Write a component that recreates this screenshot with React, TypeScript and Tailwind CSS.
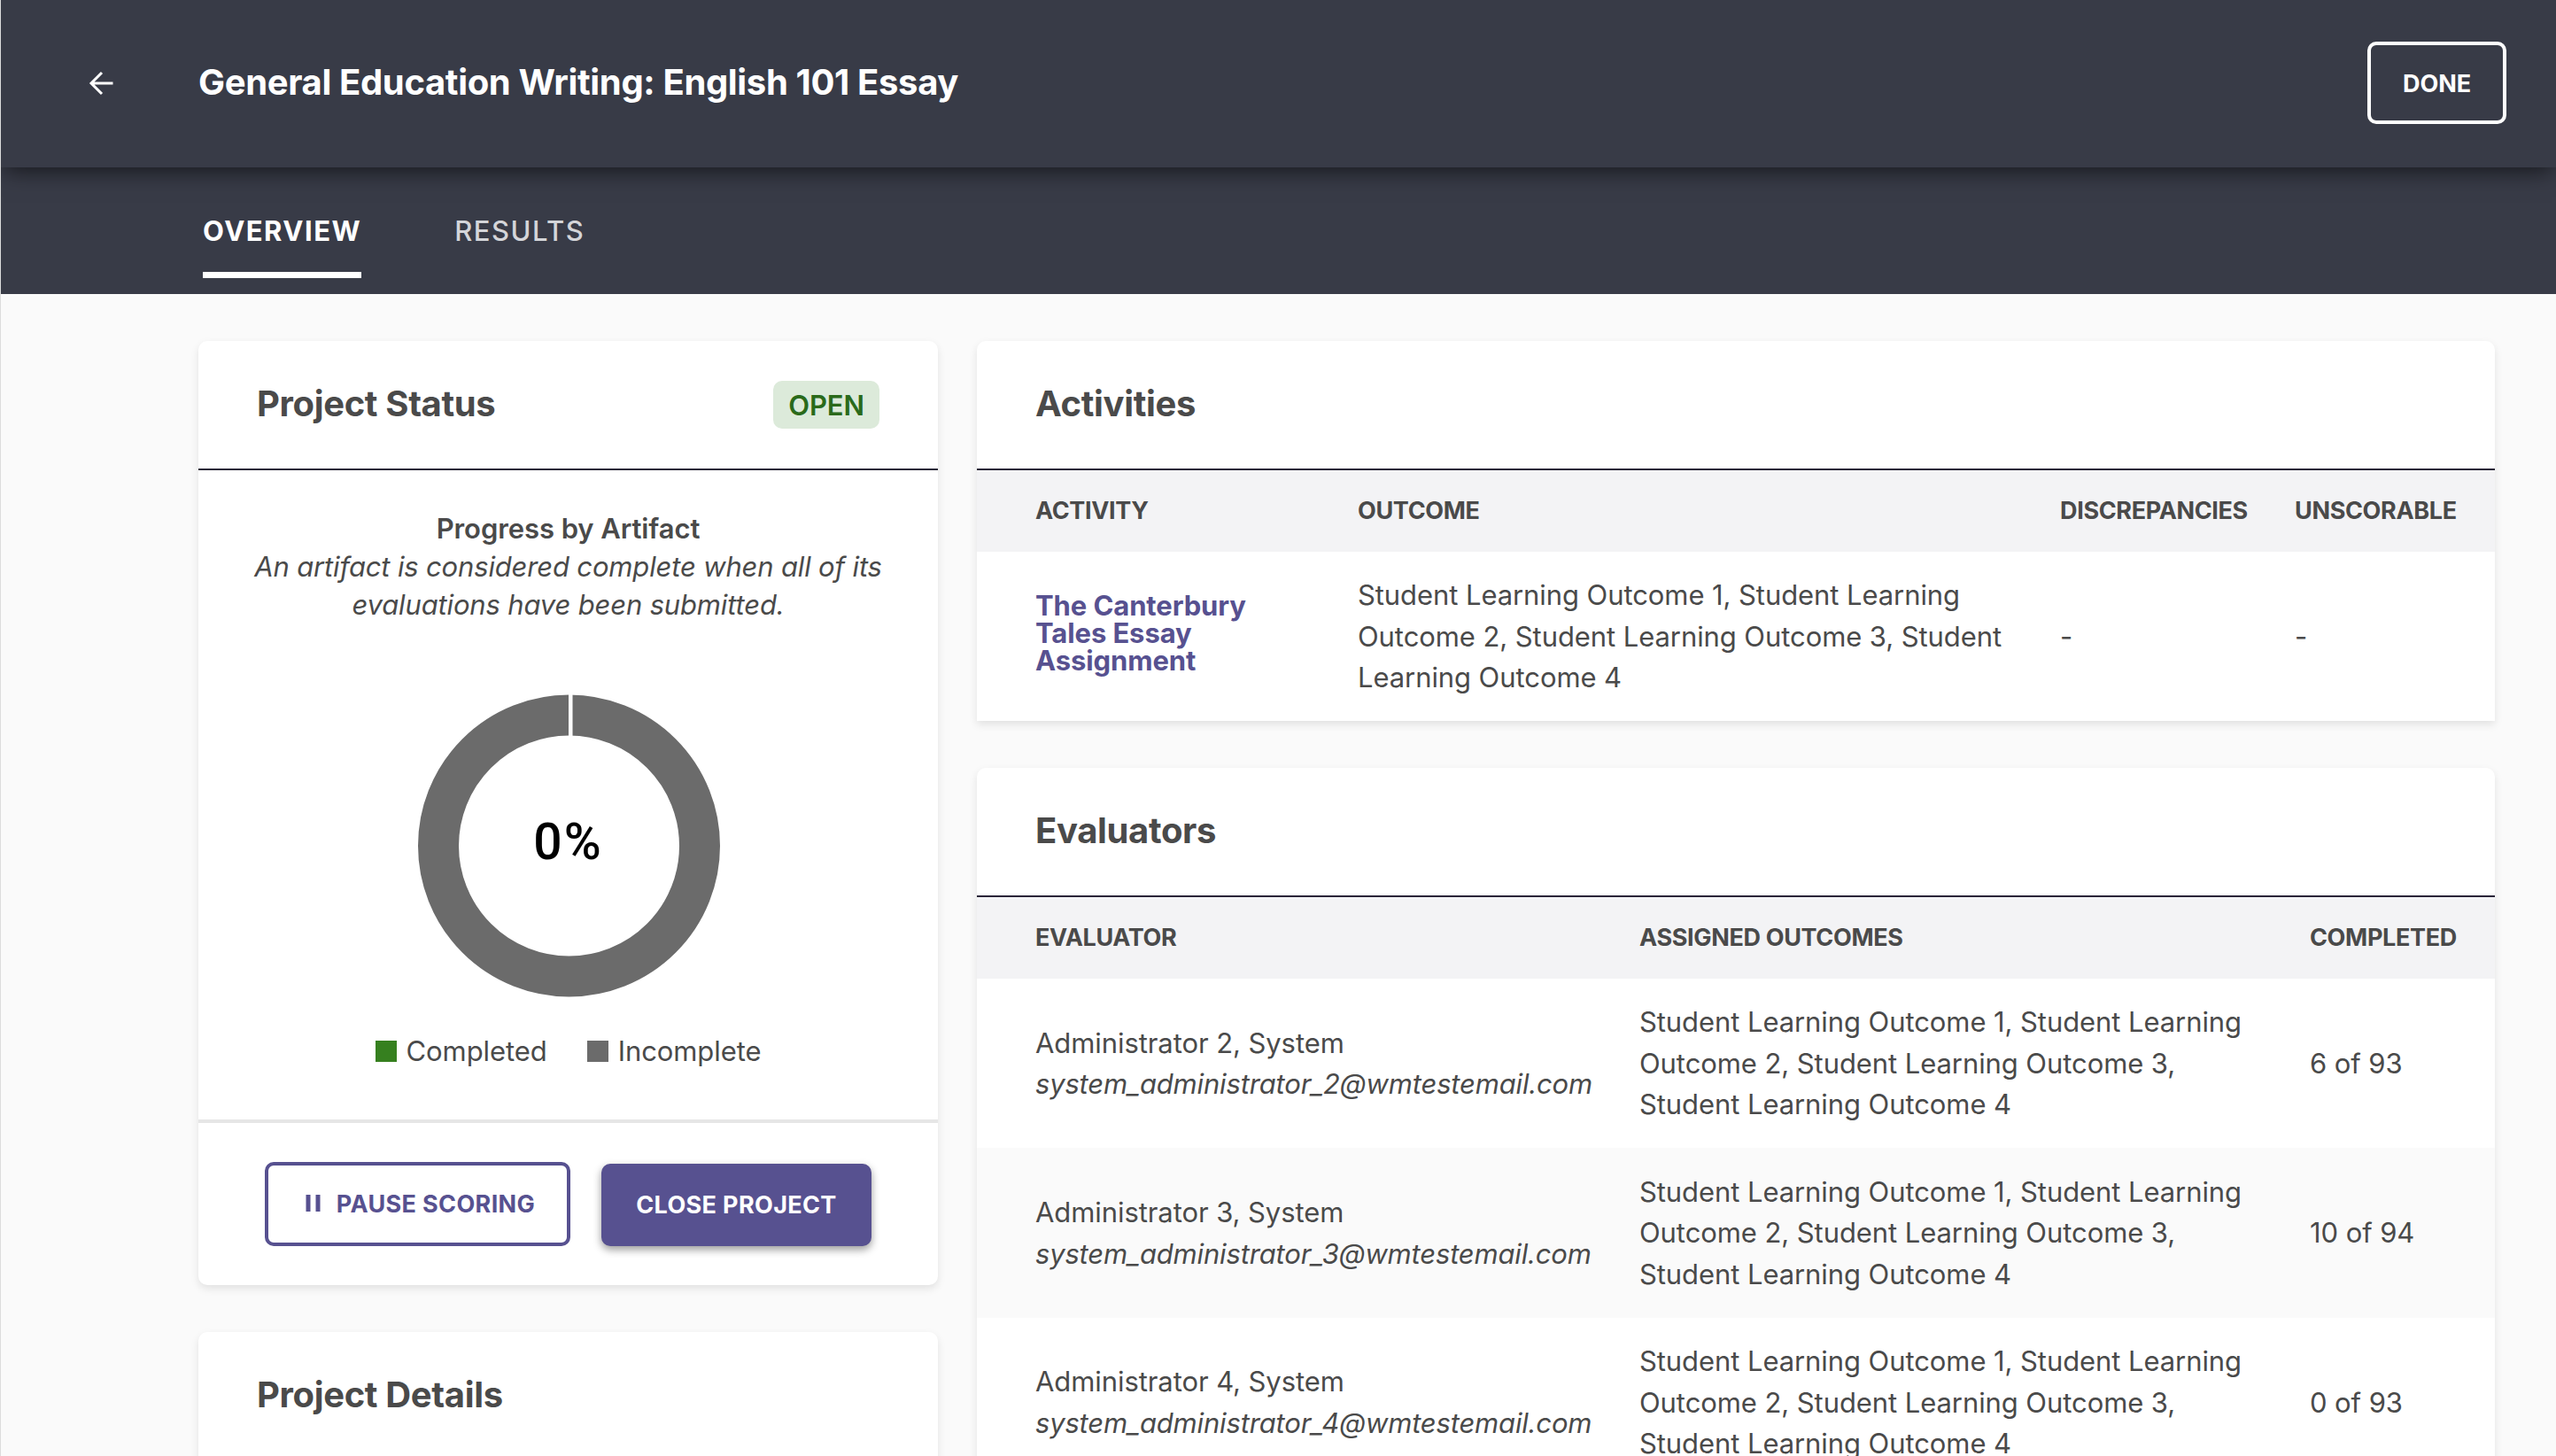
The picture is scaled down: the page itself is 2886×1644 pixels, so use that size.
import type { ReactNode } from 'react';
import clsx from 'clsx';

type Evaluator = {
  name: string;
  email: string;
  outcomes: string;
  completed: string;
};

const OUTCOMES =
  'Student Learning Outcome 1, Student Learning Outcome 2, Student Learning Outcome 3, Student Learning Outcome 4';

const activities = [
  {
    name: 'The Canterbury Tales Essay Assignment',
    outcomes: OUTCOMES,
    discrepancies: '-',
    unscorable: '-',
  },
];

const evaluators: Evaluator[] = [
  {
    name: 'Administrator 2, System',
    email: 'system_administrator_2@wmtestemail.com',
    outcomes: OUTCOMES,
    completed: '6 of 93',
  },
  {
    name: 'Administrator 3, System',
    email: 'system_administrator_3@wmtestemail.com',
    outcomes: OUTCOMES,
    completed: '10 of 94',
  },
  {
    name: 'Administrator 4, System',
    email: 'system_administrator_4@wmtestemail.com',
    outcomes: OUTCOMES,
    completed: '0 of 93',
  },
];

function BackIcon() {
  return (
    <svg
      className="size-[28px]"
      viewBox="0 0 28 28"
      fill="none"
      stroke="currentColor"
      strokeWidth="3"
    >
      <path d="M27.5 14H3M15 2 3 14l12 12" />
    </svg>
  );
}

function PauseIcon() {
  return (
    <svg
      className="mb-[3px] h-[19px] w-[17px]"
      viewBox="0 0 17 19"
      fill="currentColor"
    >
      <rect x="0.5" width="5" height="19" />
      <rect x="11.5" width="5" height="19" />
    </svg>
  );
}

function Card({
  title,
  badge,
  children,
  className,
}: {
  title: string;
  badge?: ReactNode;
  children?: ReactNode;
  className?: string;
}) {
  return (
    <section
      className={clsx(
        'bg-white shadow-[0_4px_10px_rgba(0,0,0,0.1)]',
        className,
      )}
    >
      <div className="flex h-[146px] items-center justify-between border-b-2 border-[#2a2438] px-[66px]">
        <h2 className="pb-[2px] text-[40px] leading-[48px] font-[650] tracking-[-0.35px]">
          {title}
        </h2>
        {badge}
      </div>
      {children}
    </section>
  );
}

function ProgressChart() {
  return (
    <div className="relative mx-auto mt-[80px] size-[342px]">
      <svg className="size-full" viewBox="0 0 342 342">
        <circle
          cx="171.5"
          cy="171"
          r="147.5"
          fill="none"
          stroke="#6b6b6b"
          strokeWidth="46"
        />
        <rect x="171" width="4.5" height="50" fill="#fff" />
      </svg>
      <span className="absolute inset-0 flex items-center justify-center pb-[9px] font-['Roboto',sans-serif] text-[57px] leading-none font-medium tracking-[2px] text-black">
        0%
      </span>
    </div>
  );
}

function TableHead({
  columns,
  className,
}: {
  columns: string[];
  className: string;
}) {
  return (
    <div
      className={clsx(
        'grid h-[92px] items-center bg-[#f3f3f5] pl-[66px] text-[27px] leading-[40px] font-bold tracking-[-0.35px]',
        className,
      )}
    >
      {columns.map((column) => (
        <div key={column} className="pb-px">
          {column}
        </div>
      ))}
    </div>
  );
}

const ACTIVITY_GRID = 'grid-cols-[364px_793px_265px_226px]';
const EVALUATOR_GRID = 'grid-cols-[682px_757px_209px]';

export default function App() {
  return (
    <div className="h-[1644px] w-[2886px] overflow-hidden border-l border-[#dcdcdc] bg-[#fafafa] font-['Inter',sans-serif] text-[31px] leading-[46.5px] tracking-[-0.08px] text-[#4a4a4a]">
      <header className="relative z-10 flex h-[189px] items-center bg-[#383b47] pr-[56px] pb-[2px] text-white shadow-[0_8px_24px_-4px_rgba(0,0,0,0.6)]">
        <button className="ml-[99px]">
          <BackIcon />
        </button>
        <h1 className="ml-[96px] flex-1 text-[40px] font-bold tracking-[-0.35px]">
          General Education Writing: English 101 Essay
        </h1>
        <button className="h-[93px] w-[157px] rounded-[10px] border-4 border-white pt-[3px] text-[27px] font-bold">
          DONE
        </button>
      </header>

      <nav className="flex h-[143px] items-start gap-[105px] bg-[#383b47] pt-[48px] pl-[228px] tracking-[1.5px] text-white">
        <div className="h-[77px] border-b-[7px] border-white leading-[48px] font-bold">
          OVERVIEW
        </div>
        <div className="leading-[48px] font-medium text-[#d4d5d9]">RESULTS</div>
      </nav>

      <main className="flex items-start gap-[44px] pt-[53px] pl-[223px]">
        <div className="flex w-[835px] flex-col gap-[53px]">
          <Card
            title="Project Status"
            className="h-[1066px] rounded-[10px]"
            badge={
              <span className="flex h-[54px] items-center rounded-[10px] bg-[#dceada] px-[17px] pt-[2px] font-semibold text-[#2a6a1a]">
                OPEN
              </span>
            }
          >
            <div className="h-[737px] border-b-4 border-[#e6e6e6] pt-[44px] text-center leading-[43px]">
              <p className="font-semibold">Progress by Artifact</p>
              <p className="mx-auto w-[740px] tracking-[-0.16px] italic">
                An artifact is considered complete when all of its evaluations
                have been submitted.
              </p>
              <ProgressChart />
              <div className="mt-[39px] flex items-center justify-center gap-[45px]">
                <span className="flex items-center gap-[11px]">
                  <i className="size-[24px] bg-[#36801f]" />
                  Completed
                </span>
                <span className="flex items-center gap-[11px]">
                  <i className="size-[24px] bg-[#6b6b6b]" />
                  Incomplete
                </span>
              </div>
            </div>
            <div className="flex items-end justify-center gap-[35px] pt-[44px] text-[27px] font-bold tracking-[0.35px]">
              <button className="flex h-[95px] w-[345px] items-center justify-center gap-[18px] rounded-[10px] border-4 border-[#575190] pt-px pl-[6px] text-[#575190]">
                <PauseIcon />
                PAUSE SCORING
              </button>
              <button className="h-[93px] w-[305px] rounded-[10px] bg-[#575190] pt-[2px] text-white shadow-[0_4px_10px_rgba(0,0,0,0.4)]">
                CLOSE PROJECT
              </button>
            </div>
          </Card>
          <Card title="Project Details" className="h-[400px] rounded-[10px]" />
        </div>

        <div className="flex w-[1714px] flex-col gap-[53px]">
          <Card title="Activities" className="rounded-t-[10px]">
            <TableHead
              columns={['ACTIVITY', 'OUTCOME', 'DISCREPANCIES', 'UNSCORABLE']}
              className={ACTIVITY_GRID}
            />
            {activities.map((activity) => (
              <div
                key={activity.name}
                className={clsx(
                  'grid h-[191px] items-center pt-px pl-[66px]',
                  ACTIVITY_GRID,
                )}
              >
                <a className="w-[270px] pb-[7px] leading-[30.7px] font-bold tracking-[-0.1px] text-[#575190]">
                  {activity.name}
                </a>
                <div className="w-[740px]">{activity.outcomes}</div>
                <div>{activity.discrepancies}</div>
                <div>{activity.unscorable}</div>
              </div>
            ))}
          </Card>

          <Card title="Evaluators" className="rounded-t-[10px]">
            <TableHead
              columns={['EVALUATOR', 'ASSIGNED OUTCOMES', 'COMPLETED']}
              className={EVALUATOR_GRID}
            />
            {evaluators.map((evaluator) => (
              <div
                key={evaluator.email}
                className={clsx(
                  'grid h-[191.4px] items-center pt-px pl-[66px] odd:bg-white even:bg-[#fafafa]',
                  EVALUATOR_GRID,
                )}
              >
                <div>
                  <div>{evaluator.name}</div>
                  <div className="tracking-[-0.17px] italic">
                    {evaluator.email}
                  </div>
                </div>
                <div className="w-[704px]">{evaluator.outcomes}</div>
                <div>{evaluator.completed}</div>
              </div>
            ))}
          </Card>
        </div>
      </main>
    </div>
  );
}
